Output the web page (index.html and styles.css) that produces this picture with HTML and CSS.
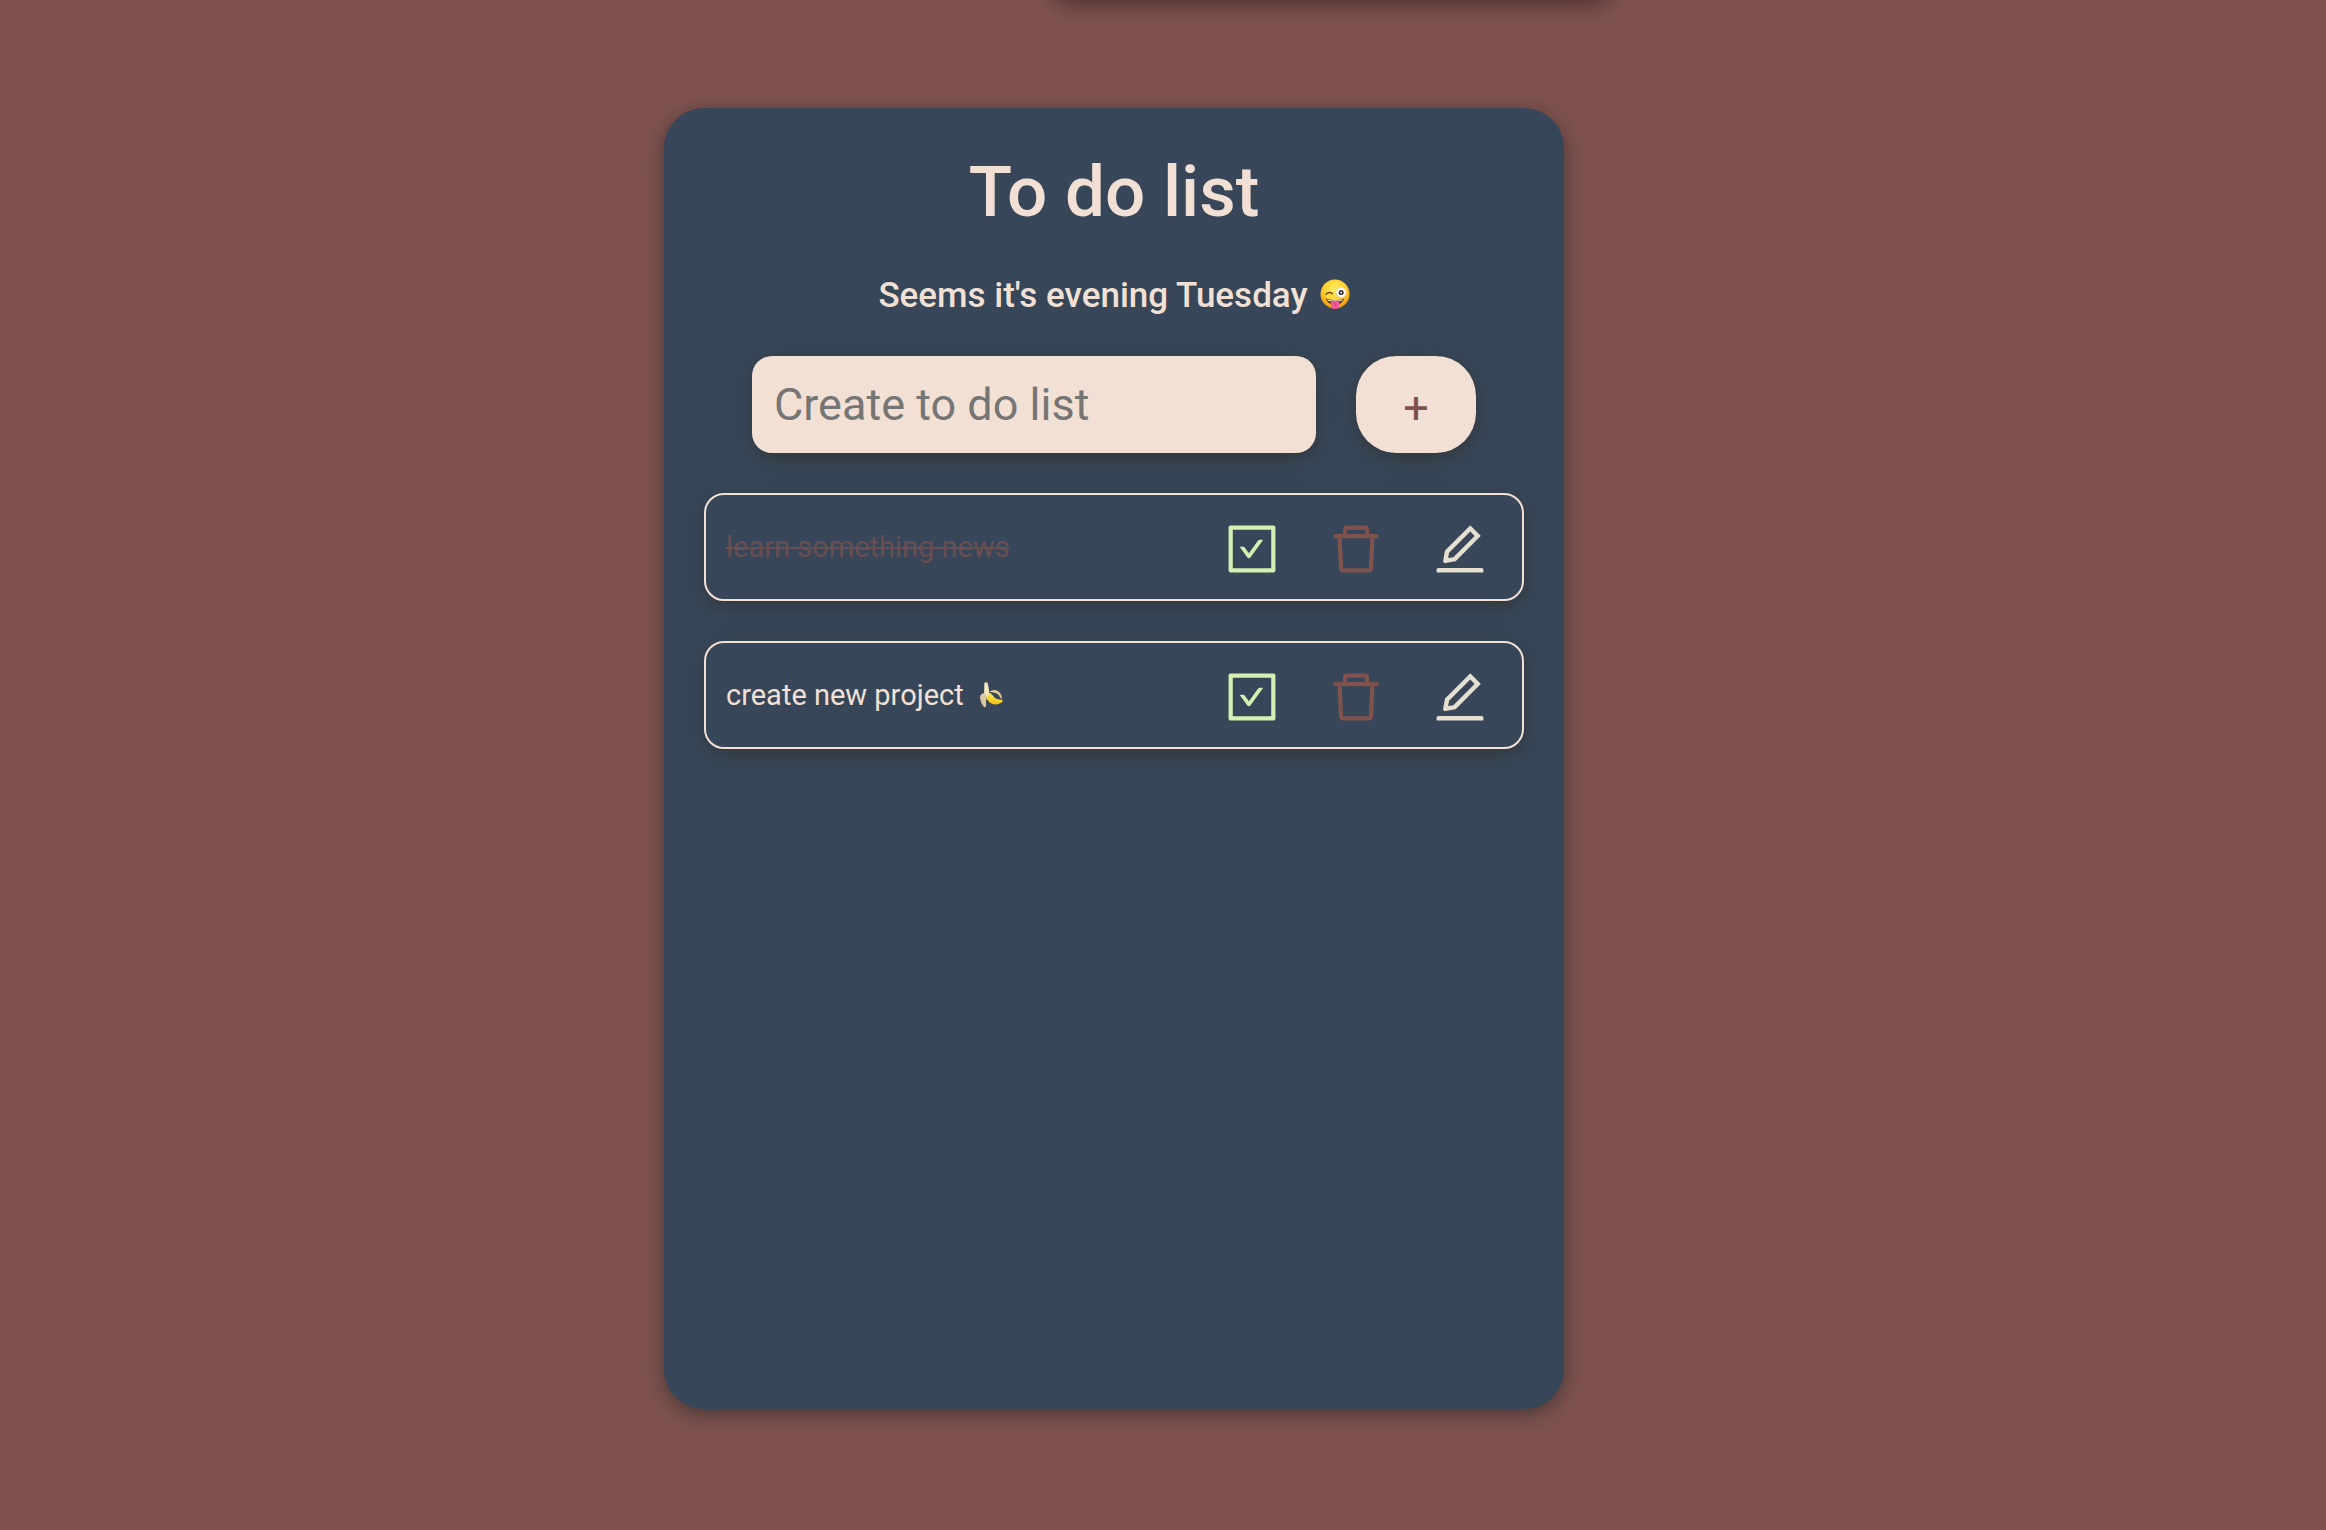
FILE: index.html
```html
<!DOCTYPE html>
<html lang="en">
<head>
<meta charset="utf-8">
<meta name="viewport" content="width=device-width, initial-scale=1">
<title>To do list</title>
<link rel="stylesheet" href="styles.css">
</head>
<body>
<svg class="sprite" aria-hidden="true">
  <symbol id="icon-check" viewBox="0 0 1024 1024">
    <path d="M433.1 657.7a31.8 31.8 0 0 0 51.7 0l210.6-292c3.8-5.3 0-12.7-6.5-12.7H642c-10.2 0-19.9 4.9-25.9 13.3L459 584.3l-71.2-98.8c-6-8.3-15.6-13.3-25.9-13.3H315c-6.5 0-10.3 7.4-6.5 12.7l124.6 172.8z"/>
    <path d="M880 112H144c-17.7 0-32 14.3-32 32v736c0 17.7 14.3 32 32 32h736c17.7 0 32-14.3 32-32V144c0-17.7-14.3-32-32-32zm-40 728H184V184h656v656z"/>
  </symbol>
  <symbol id="icon-delete" viewBox="0 0 1024 1024">
    <path d="M360 184h-8c4.4 0 8-3.6 8-8v8h304v-8c0 4.4 3.6 8 8 8h-8v72h72v-80c0-35.3-28.7-64-64-64H352c-35.3 0-64 28.7-64 64v80h72v-72zm504 72H160c-17.7 0-32 14.3-32 32v32c0 4.4 3.6 8 8 8h60.4l24.7 523c1.6 34.1 29.8 61 63.9 61h454c34.2 0 62.3-26.8 63.9-61l24.7-523H888c4.4 0 8-3.6 8-8v-32c0-17.7-14.3-32-32-32zM731.3 840H292.7l-24.2-512h487l-24.2 512z"/>
  </symbol>
  <symbol id="icon-edit" viewBox="0 0 1024 1024">
    <path d="M257.7 752c2 0 4-.2 6-.5L431.9 722c2-.4 3.9-1.3 5.3-2.8l423.9-423.9a9.96 9.96 0 0 0 0-14.1L694.9 114.9c-1.9-1.9-4.4-2.9-7.1-2.9s-5.2 1-7.1 2.9L256.8 538.8c-1.5 1.5-2.4 3.3-2.8 5.3l-29.5 168.2a33.5 33.5 0 0 0 9.4 29.8c6.6 6.4 14.9 9.9 23.8 9.9zm67.4-174.4L687.8 215l73.3 73.3-362.7 362.6-88.9 15.7 15.6-89zM880 836H144c-17.7 0-32 14.3-32 32v36c0 4.4 3.6 8 8 8h784c4.4 0 8-3.6 8-8v-36c0-17.7-14.3-32-32-32z"/>
  </symbol>
</svg>
<div class="panel-above"></div>
<main class="page">
  <section class="card">
    <h1 class="title">To do list</h1>
    <h2 class="greeting">
      <span>Seems it's evening Tuesday</span>
      <svg class="emoji" viewBox="0 0 30 30" role="img" aria-label="winking face with tongue">
        <defs>
          <radialGradient id="face" cx="50%" cy="35%" r="65%">
            <stop offset="0" stop-color="#fff06a"/>
            <stop offset=".6" stop-color="#ffd02e"/>
            <stop offset="1" stop-color="#ee9310"/>
          </radialGradient>
        </defs>
        <circle cx="15" cy="15" r="14.5" fill="url(#face)"/>
        <path d="M6 15.200q3-3 6.500-.4" fill="none" stroke="#6b3f0c" stroke-width="1.400" stroke-linecap="round"/>
        <circle cx="21.200" cy="13.500" r="5" fill="#fff" stroke="#d9c9b0" stroke-width=".6"/>
        <circle cx="21.200" cy="13.500" r="2.500" fill="#2b2522"/>
        <circle cx="21.200" cy="13.500" r="1" fill="#fff"/>
        <path d="M5.500 19.500q9.500 3.500 19 0q-2.500 6.500-9.500 6.500t-9.500-6.500z" fill="#70390f"/>
        <path d="M7.500 20.400q7.500 2.400 15 0v1q-7.500 2-15 0z" fill="#fff"/>
        <path d="M10.800 22.600h8.400v3.600a4.200 3.800 0 0 1-8.400 0z" fill="#f3589a"/>
        <path d="M15 23.500v3.500" stroke="#cf3476" stroke-width=".8"/>
      </svg>
    </h2>
    <form class="create">
      <input class="create-input" type="text" placeholder="Create to do list" aria-label="Create to do list">
      <button class="create-button" type="button" aria-label="Add">+</button>
    </form>
    <ul class="tasks">
      <li class="task">
        <span class="task-text task-done">learn something news</span>
        <div class="actions">
          <button class="action action-check" type="button" aria-label="Complete"><svg><use href="#icon-check"/></svg></button>
          <button class="action action-delete" type="button" aria-label="Delete"><svg><use href="#icon-delete"/></svg></button>
          <button class="action action-edit" type="button" aria-label="Edit"><svg><use href="#icon-edit"/></svg></button>
        </div>
      </li>
      <li class="task">
        <span class="task-text">create new project
          <svg class="emoji-small" viewBox="0 0 26 28" role="img" aria-label="banana">
            <defs>
              <linearGradient id="peel" x1="0" y1="0" x2="0" y2="1">
                <stop offset="0" stop-color="#ffe65a"/>
                <stop offset="1" stop-color="#f0c010"/>
              </linearGradient>
            </defs>
            <path d="M11 11q4.500-3 9-1q4.500 3 4.800 8q-1 .6-1.800-.5q-2-5.500-7.500-5.800z" fill="#e3cf9a"/>
            <path d="M8.500 12q4-.5 6.500 3q2 3 4.500 4q3 1 5.800.7q.8 1.600-.8 3q-7 4.500-13 0q-4-4-5-8z" fill="url(#peel)"/>
            <path d="M5.800 1.500q2.200-1.500 3.600.3q1.600 5.500 1.600 10.700l-1.500 3.500l-4-2z" fill="#f6e9bd"/>
            <path d="M5.800 12.500q-4.500.5-4.800 5q.8 6 4.500 10.200q1.800.2 2.200-1.200q-.6-5.500.8-11z" fill="#dfc9a0"/>
          </svg>
        </span>
        <div class="actions">
          <button class="action action-check" type="button" aria-label="Complete"><svg><use href="#icon-check"/></svg></button>
          <button class="action action-delete" type="button" aria-label="Delete"><svg><use href="#icon-delete"/></svg></button>
          <button class="action action-edit" type="button" aria-label="Edit"><svg><use href="#icon-edit"/></svg></button>
        </div>
      </li>
    </ul>
  </section>
</main>
</body>
</html>
```
FILE: styles.css
```css
:root {
  --brown: #7f524e;
  --navy: #374759;
  --cream: #f2e0d4;
  --shadow: 0 5px 20px rgba(51, 49, 49, .75);
}

* {
  box-sizing: border-box;
}

body {
  margin: 0;
  min-height: 100vh;
  background: var(--brown);
  color: var(--cream);
  font-family: Roboto, "Liberation Sans", sans-serif;
}

.sprite {
  position: absolute;
  width: 0;
  height: 0;
}

/* Lower edge of the panel that sits above the list */
.panel-above {
  position: absolute;
  bottom: 100%;
  left: 1052px;
  width: 560px;
  height: 80px;
  border-radius: 20px;
  box-shadow: 0 5px 20px rgba(0, 0, 0, .4);
}

.page {
  display: flex;
  justify-content: center;
  padding: 108px 98px 40px 0;
}

.card {
  width: 100%;
  max-width: 900px;
  min-height: 85vh;
  padding: 42px 40px 40px;
  border-radius: 40px;
  background: var(--navy);
  box-shadow: var(--shadow);
}

.title {
  margin: 0 0 32px;
  font-size: 71px;
  font-weight: 500;
  line-height: 84px;
  text-align: center;
}

.greeting {
  display: flex;
  align-items: center;
  justify-content: center;
  gap: 12px;
  margin: 0 0 30px;
  font-size: 35px;
  font-weight: 500;
  line-height: 60px;
}

.emoji {
  width: 30px;
  height: 30px;
  margin-bottom: 4px;
}

.create {
  display: flex;
  justify-content: center;
  gap: 40px;
  margin-bottom: 40px;
}

.create-input {
  width: 564px;
  min-width: 0;
  height: 97px;
  padding: 0 22px;
  border: 0;
  border-radius: 20px;
  background: var(--cream);
  box-shadow: var(--shadow);
  color: var(--brown);
  font: 45px Roboto, "Liberation Sans", sans-serif;
}

.create-input::placeholder {
  color: #757575;
  opacity: 1;
}

.create-button {
  width: 120px;
  padding: 5px 0 0;
  border: 0;
  border-radius: 40px;
  background: var(--cream);
  box-shadow: var(--shadow);
  color: var(--brown);
  font: 45px Roboto, "Liberation Sans", sans-serif;
}

.tasks {
  display: grid;
  gap: 40px;
  margin: 0;
  padding: 0;
  list-style: none;
}

.task {
  display: flex;
  align-items: center;
  justify-content: space-between;
  padding: 24px 32px 20px 20px;
  border: 2px solid var(--cream);
  border-radius: 20px;
  box-shadow: var(--shadow);
}

.task-text {
  padding-bottom: 4px;
  font-size: 29px;
  line-height: 36px;
}

.task-done {
  color: var(--brown);
  opacity: .7;
  text-decoration: line-through;
}

.emoji-small {
  width: 24px;
  height: 27px;
  margin-left: 8px;
  vertical-align: -3px;
}

.actions {
  display: flex;
  gap: 44px;
}

.action {
  width: 60px;
  height: 60px;
  padding: 0;
  border: 0;
  background: none;
}

.action svg {
  display: block;
  width: 100%;
  height: 100%;
  fill: currentColor;
}

.action-check {
  color: #d6efb3;
}

.action-delete {
  color: var(--brown);
}

.action-edit {
  color: #e6e0d1;
}
```
